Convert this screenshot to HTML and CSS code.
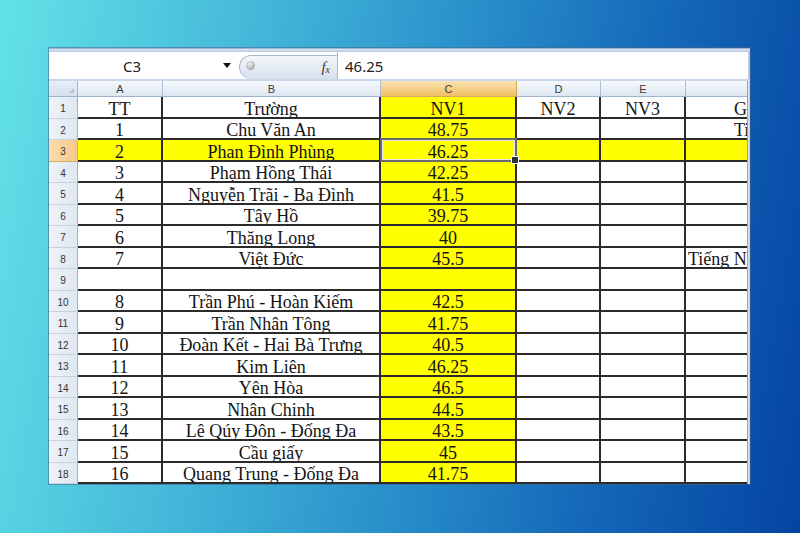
FILE: index.html
```html
<!DOCTYPE html>
<html lang="vi">
<head>
<meta charset="utf-8">
<title>Điểm chuẩn</title>
<link rel="stylesheet" href="styles.css">
</head>
<body>
<div class="page">
  <div class="window">
    <div class="frame-top"></div>
    <div class="formula">
      <div class="namebox">
        <span class="namebox-text">C3</span>
        <span class="namebox-drop"><span class="tri"></span></span>
      </div>
      <div class="fx-pill">
        <span class="orb"></span>
        <span class="fx">f<sub>x</sub></span>
      </div>
      <div class="formula-input">46.25</div>
    </div>
    <div class="formula-sep"></div>
    <div class="sheet">
      <div class="grid">
        <div class="corner"></div>
        <div class="ch">A</div>
        <div class="ch">B</div>
        <div class="ch sel">C</div>
        <div class="ch">D</div>
        <div class="ch">E</div>
        <div class="ch">F</div>

        <div class="rh">1</div>
        <div class="c">TT</div>
        <div class="c">Trường</div>
        <div class="c hl">NV1</div>
        <div class="c">NV2</div>
        <div class="c">NV3</div>
        <div class="c note-shift">Ghi chú</div>

        <div class="rh">2</div>
        <div class="c">1</div>
        <div class="c">Chu Văn An</div>
        <div class="c hl">48.75</div>
        <div class="c"></div>
        <div class="c"></div>
        <div class="c note-shift">Tiếng Pháp</div>

        <div class="rh sel">3</div>
        <div class="c hl">2</div>
        <div class="c hl">Phan Đình Phùng</div>
        <div class="c hl active">46.25</div>
        <div class="c hl"></div>
        <div class="c hl"></div>
        <div class="c hl"></div>

        <div class="rh">4</div>
        <div class="c">3</div>
        <div class="c">Phạm Hồng Thái</div>
        <div class="c hl">42.25</div>
        <div class="c"></div>
        <div class="c"></div>
        <div class="c"></div>

        <div class="rh">5</div>
        <div class="c">4</div>
        <div class="c">Nguyễn Trãi - Ba Đình</div>
        <div class="c hl">41.5</div>
        <div class="c"></div>
        <div class="c"></div>
        <div class="c"></div>

        <div class="rh">6</div>
        <div class="c">5</div>
        <div class="c">Tây Hồ</div>
        <div class="c hl">39.75</div>
        <div class="c"></div>
        <div class="c"></div>
        <div class="c"></div>

        <div class="rh">7</div>
        <div class="c">6</div>
        <div class="c">Thăng Long</div>
        <div class="c hl">40</div>
        <div class="c"></div>
        <div class="c"></div>
        <div class="c"></div>

        <div class="rh">8</div>
        <div class="c">7</div>
        <div class="c">Việt Đức</div>
        <div class="c hl">45.5</div>
        <div class="c"></div>
        <div class="c"></div>
        <div class="c note-left">Tiếng Nhật</div>

        <div class="rh">9</div>
        <div class="c"></div>
        <div class="c"></div>
        <div class="c hl"></div>
        <div class="c"></div>
        <div class="c"></div>
        <div class="c"></div>

        <div class="rh">10</div>
        <div class="c">8</div>
        <div class="c">Trần Phú - Hoàn Kiếm</div>
        <div class="c hl">42.5</div>
        <div class="c"></div>
        <div class="c"></div>
        <div class="c"></div>

        <div class="rh">11</div>
        <div class="c">9</div>
        <div class="c">Trần Nhân Tông</div>
        <div class="c hl">41.75</div>
        <div class="c"></div>
        <div class="c"></div>
        <div class="c"></div>

        <div class="rh">12</div>
        <div class="c">10</div>
        <div class="c">Đoàn Kết - Hai Bà Trưng</div>
        <div class="c hl">40.5</div>
        <div class="c"></div>
        <div class="c"></div>
        <div class="c"></div>

        <div class="rh">13</div>
        <div class="c">11</div>
        <div class="c">Kim Liên</div>
        <div class="c hl">46.25</div>
        <div class="c"></div>
        <div class="c"></div>
        <div class="c"></div>

        <div class="rh">14</div>
        <div class="c">12</div>
        <div class="c">Yên Hòa</div>
        <div class="c hl">46.5</div>
        <div class="c"></div>
        <div class="c"></div>
        <div class="c"></div>

        <div class="rh">15</div>
        <div class="c">13</div>
        <div class="c">Nhân Chinh</div>
        <div class="c hl">44.5</div>
        <div class="c"></div>
        <div class="c"></div>
        <div class="c"></div>

        <div class="rh">16</div>
        <div class="c">14</div>
        <div class="c">Lê Qúy Đôn - Đống Đa</div>
        <div class="c hl">43.5</div>
        <div class="c"></div>
        <div class="c"></div>
        <div class="c"></div>

        <div class="rh">17</div>
        <div class="c">15</div>
        <div class="c">Cầu giấy</div>
        <div class="c hl">45</div>
        <div class="c"></div>
        <div class="c"></div>
        <div class="c"></div>

        <div class="rh">18</div>
        <div class="c">16</div>
        <div class="c">Quang Trung - Đống Đa</div>
        <div class="c hl">41.75</div>
        <div class="c"></div>
        <div class="c"></div>
        <div class="c"></div>
      </div>
      <div class="vscroll"></div>
    </div>
  </div>
</div>
</body>
</html>
```

FILE: styles.css
```css
* { box-sizing: border-box; }

html, body { margin: 0; }

body {
  width: 800px;
  height: 533px;
  overflow: hidden;
  background: linear-gradient(100deg, #63e2e7 0%, #45b9da 28%, #2a92cb 52%, #1467b8 76%, #0444a2 100%);
  font-family: "Liberation Serif", serif;
}

.page { padding: 48px 0 0 49px; }

/* spreadsheet window */
.window {
  width: 701px;
  height: 436px;
  display: flex;
  flex-direction: column;
  background: #fff;
  box-shadow: 0 0 0 1px rgba(70, 100, 140, 0.55);
}

.frame-top {
  height: 4px;
  background: linear-gradient(#dde7f3, #b6c9e1);
  border-top: 1px solid #9db3d0;
}

/* formula bar */
.formula {
  height: 27px;
  display: flex;
  background: #fff;
}

.namebox {
  width: 190px;
  display: flex;
  align-items: center;
  font: 15px "Noto Sans", sans-serif;
  color: #222;
}

.namebox-text {
  flex: 1;
  text-align: center;
}

.namebox-drop {
  width: 24px;
  display: flex;
  justify-content: center;
}

.tri {
  width: 0;
  height: 0;
  border-left: 4px solid transparent;
  border-right: 4px solid transparent;
  border-top: 5px solid #111;
}

.fx-pill {
  width: 98px;
  margin-top: 3px;
  display: flex;
  align-items: center;
  justify-content: space-between;
  padding: 0 6px 0 6px;
  border: 1px solid #a6b8cf;
  border-right: none;
  border-bottom: none;
  border-radius: 12px 0 0 12px;
  background: linear-gradient(#f4f7fb, #d6e0ec);
}

.orb {
  width: 9px;
  height: 9px;
  margin-top: -4px;
  border-radius: 50%;
  background: radial-gradient(circle at 40% 35%, #f2f2f2, #a9a9a9 70%, #8c8c8c);
}

.fx {
  font: italic 15px "Liberation Serif", serif;
  color: #3d3d3d;
  margin-right: 1px;
}

.fx sub {
  font-size: 10px;
  vertical-align: -1px;
}

.formula-input {
  flex: 1;
  display: flex;
  align-items: center;
  padding-left: 7px;
  border-left: 1px solid #a6b8cf;
  border-right: 2px solid #b8c8dc;
  font: 15px "Noto Sans", sans-serif;
  color: #222;
}

.formula-sep {
  height: 2px;
  background: #c8d7ea;
}

/* sheet */
.sheet {
  flex: 1;
  display: flex;
  min-height: 0;
}

.grid {
  width: 698px;
  flex: none;
  overflow: hidden;
  display: grid;
  grid-template-columns: 29px 85px 218px 136px 84px 85px 160px;
  grid-template-rows: 16px repeat(18, 21.5px);
}

.vscroll {
  flex: 1;
  background: linear-gradient(90deg, #e6edf6, #b3c5dc);
  border-left: 1px solid #8ea4c0;
}

.corner {
  position: relative;
  background: linear-gradient(#e8eef6, #d5e0ed);
  border-right: 1px solid #9eb3cc;
  border-bottom: 1px solid #9eb3cc;
}

.corner::after {
  content: "";
  position: absolute;
  right: 3px;
  bottom: 3px;
  border-left: 5px solid transparent;
  border-bottom: 5px solid #b4c5da;
}

.ch {
  display: flex;
  align-items: center;
  justify-content: center;
  padding-top: 1px;
  background: linear-gradient(#f6f9fc, #dde6f1);
  border-right: 1px solid #aabdd3;
  border-bottom: 1px solid #9eb3cc;
  font: 11px "Liberation Sans", sans-serif;
  color: #3a3a3a;
}

.ch.sel {
  background: linear-gradient(#fbe2b2, #f1c064);
  border-color: #d9a95a;
}

.rh {
  display: flex;
  align-items: center;
  justify-content: center;
  padding-top: 3px;
  background: linear-gradient(90deg, #eef3f9, #dfe7f1);
  border-right: 1px solid #9eb3cc;
  border-bottom: 1px solid #c3d1e2;
  font: 10px "Liberation Sans", sans-serif;
  color: #333;
}

.rh.sel {
  background: linear-gradient(90deg, #fbdcae, #f6c98a);
  border-bottom-color: #d9a95a;
}

.c {
  display: flex;
  align-items: center;
  justify-content: center;
  padding-top: 4px;
  border-right: 2px solid #2b2b2b;
  border-bottom: 2px solid #2b2b2b;
  font-size: 18px;
  line-height: 1;
  color: #141414;
  white-space: nowrap;
  overflow: hidden;
  background: #fff;
}

.c.hl { background: #ffff00; }

.c.note-shift {
  justify-content: flex-start;
  padding-left: 48px;
}

.c.note-left {
  justify-content: flex-start;
  padding-left: 2px;
}

/* active cell outline with fill handle */
.c.active {
  position: relative;
  overflow: visible;
}

.c.active::after {
  content: "";
  position: absolute;
  left: -1px;
  top: -2px;
  right: -2px;
  bottom: -2px;
  border: 2px solid #6a6a6a;
  box-shadow: inset 0 0 0 1px #e9e9e9;
  pointer-events: none;
}

.c.active::before {
  content: "";
  position: absolute;
  right: -4px;
  bottom: -4px;
  width: 6px;
  height: 6px;
  background: #333;
  border: 1px solid #fff;
  z-index: 1;
}
```
